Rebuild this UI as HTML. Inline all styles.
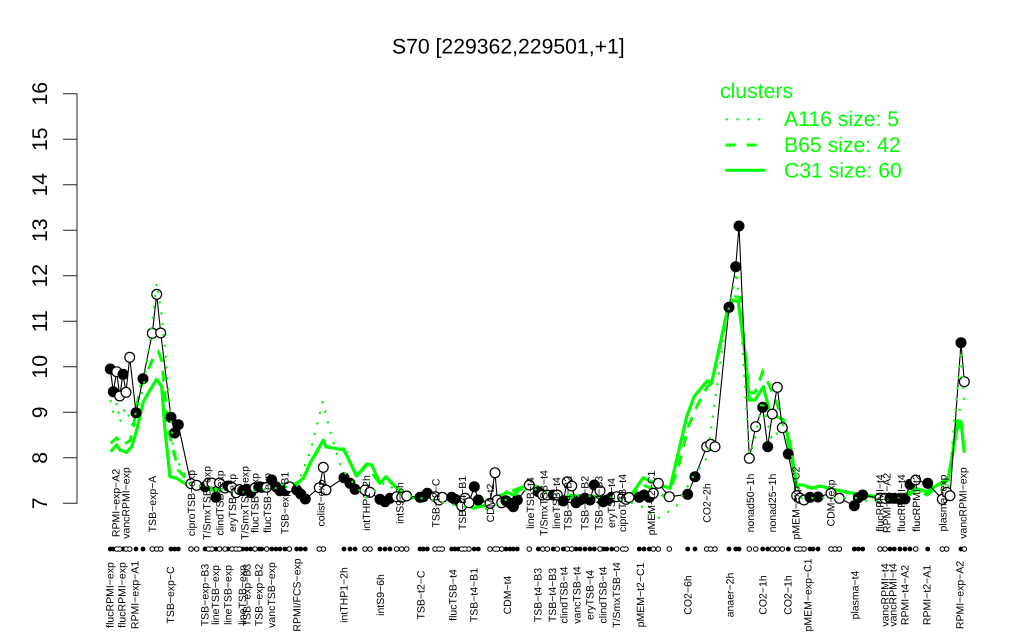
<!DOCTYPE html>
<html><head><meta charset="utf-8"><style>
html,body{margin:0;padding:0;background:#fff;width:1024px;height:640px;overflow:hidden}
svg{display:block}
text{font-family:"Liberation Sans",sans-serif;fill:#000;text-rendering:geometricPrecision}
.y{font-size:21.2px;text-anchor:middle}
.l{font-size:10.5px;text-anchor:middle;fill:#111}
.g{fill:#00ff00;font-size:21.2px}
circle{r:4.9px;stroke:#000;stroke-width:1.2}
.f{fill:#000}.o{fill:#fff}
</style></head><body>
<svg width="1024" height="640" viewBox="0 0 1024 640" xmlns="http://www.w3.org/2000/svg">
<text x="508.3" y="53.5" text-anchor="middle" style="font-size:21.2px">S70 [229362,229501,+1]</text>
<path d="M63 93.7H77V503.3H63M63 139.2H77M63 184.7H77M63 230.2H77M63 275.7H77M63 321.2H77M63 366.8H77M63 412.3H77M63 457.8H77" fill="none" stroke="#222" stroke-width="1"/>
<g class="y">
<text transform="translate(47,503.3) rotate(-90)">7</text>
<text transform="translate(47,457.8) rotate(-90)">8</text>
<text transform="translate(47,412.3) rotate(-90)">9</text>
<text transform="translate(47,366.8) rotate(-90)">10</text>
<text transform="translate(47,321.2) rotate(-90)">11</text>
<text transform="translate(47,275.7) rotate(-90)">12</text>
<text transform="translate(47,230.2) rotate(-90)">13</text>
<text transform="translate(47,184.7) rotate(-90)">14</text>
<text transform="translate(47,139.2) rotate(-90)">15</text>
<text transform="translate(47,93.7) rotate(-90)">16</text>
</g>
<polyline fill="none" stroke="#00ff00" stroke-width="3.2" stroke-linejoin="round" points="110.7,451.7 116.7,445 120,450 126.7,452.3 131.7,446.7 136.7,430 143.3,401.7 150,390 156.7,379.3 161.7,386.7 165,430 170,476.7 176.7,478.3 190,486.7 210,489 240,491 270,488 296.7,483.3 303.3,478.3 310,463.3 323.3,440 326,446.7 344,450 356.7,476 366.7,464 371.7,465 380,483.3 386,476.7 396.7,488 410,498 430,496 453,497 473,508 487,505 497,501.7 506.7,491.7 513,495 530,481.7 537,493 557,495 570,498 590,496 610,498 630,496.7 643.3,477.7 655,483.3 670,488.3 686.7,416.7 694,396.7 707.3,380.7 711.7,382.7 726.7,313.3 733.3,300 738.3,301.7 745,353.3 749.3,400 755,400 763.3,386.7 770,413 783.3,420 790,443.3 796.7,485 803.3,485 811.7,488.3 820,486 836.7,490 856.7,494 871.7,496.7 885,500 906.7,498.3 915,488 926.7,491.7 948.3,478.3 956.7,430 961,421.7 964.3,452.7"/>
<polyline fill="none" stroke="#00ff00" stroke-width="3" stroke-dasharray="11 9" points="110.7,443.3 116.7,438 123,445 130,440.7 133.3,426.7 140,388 153.3,358 158.3,351.7 161.7,360 168.3,430 178.3,470 190,483.3 210,490 240,492 270,489 296.7,484 303.3,479 310,464 323.3,441 326,447 344,449 356.7,477 366.7,465 380,484 386,477 396.7,489 410,499 453,498 473,505 506.7,493 530,484 557,494 590,497 630,497 643.3,485 655,490 666.7,498 676.7,473.3 688.3,426.7 696.7,406.7 707.3,386.7 711.7,383 726.7,316.7 735,296.7 740,297.3 746.7,370 749.3,392.7 755,392.7 762.7,371.7 770,386.7 783.3,420 793.3,466.7 796.7,486.7 820,488 856.7,494 890,498 918,490 926.7,495 948.3,480 956.7,425 960,409"/>
<polyline fill="none" stroke="#000" stroke-width="1.1" stroke-linejoin="round" points="110.3,369 113.3,391.7 116.7,371.7 119.7,396 123,374.3 126,392.3 129.7,357.3 136,412.7 143,378.7 152.3,333.3 156.7,294.3 160.7,333 171,417.3 174.7,433 178.3,424.7 191,483.7 196.7,485.3 205,486.7 208.5,483 212,483 216,497.3 219.5,483 225,488 228,486 232,487.5 236,492.7 239.5,489.5 242.7,490.7 246.7,489.3 250.7,492.7 255,488 259.3,486.7 261.7,487.3 266.7,487.3 271.7,480 276,486.7 280,490.7 285,490.7 289.3,486.7 296.7,490 300.7,494 305.3,499 319.3,487.7 323.3,467.3 326,490 344,477.7 350,483.3 355,489.3 365,490 370,492.3 380,499.3 385,501.7 390,498.3 396.7,496.7 401.7,497.3 406.7,496 420,497.3 423.3,496.7 427.3,493.3 435,496.7 439,500 442.3,497.3 451.7,497.3 455,499.3 458.3,500.7 461.7,505.7 465,498.3 469,502.7 474.3,486.7 478.3,500 490,503.3 495,472.7 497.3,500 501.7,502.7 506,500.7 510,503.3 513.3,506.7 517.3,500 529.3,485 538.3,491.7 542.7,495 547.3,495 553.3,495 557.3,495 563.3,501 567.3,481.7 571.7,486 576,502.7 580,500 585,498.3 590,500 594.3,485 600,490.7 603.3,501.7 606.7,500 611.7,497.3 616.7,496.7 622.7,497.3 626,499.3 629,497.5 639.3,497.3 644,495 649.3,497.3 653.3,493.3 658.3,483.3 669.3,496.7 687.7,494.3 695,476.7 706.7,446.7 710.7,444.3 715,446.7 729,307.3 735.7,266.7 739,226 749.3,458.3 755.7,426.7 762.7,407.3 767.7,446.7 772.3,414 777.3,387.3 782.3,427.7 788.3,454 796.7,495.7 800,498.3 804,500 810,497.3 818,497 831,493.3 839.3,498.3 854.3,505.7 858.3,497.7 862.7,495 880,498.3 885,498.3 890,498.3 894.3,498.3 900,499.3 905,499 910,484.3 915.7,480 927.7,483.3 942.3,499.3 946.7,492.3 950,495.7 961,342.7 964.3,381.7"/>
<circle class="f" cx="110.3" cy="369"/><circle class="f" cx="113.3" cy="391.7"/><circle class="o" cx="116.7" cy="371.7"/><circle class="o" cx="119.7" cy="396"/><circle class="f" cx="123" cy="374.3"/><circle class="o" cx="126" cy="392.3"/><circle class="o" cx="129.7" cy="357.3"/><circle class="f" cx="136" cy="412.7"/><circle class="f" cx="143" cy="378.7"/><circle class="o" cx="152.3" cy="333.3"/><circle class="o" cx="156.7" cy="294.3"/><circle class="o" cx="160.7" cy="333"/><circle class="f" cx="171" cy="417.3"/><circle class="f" cx="174.7" cy="433"/><circle class="f" cx="178.3" cy="424.7"/><circle class="o" cx="191" cy="483.7"/><circle class="o" cx="196.7" cy="485.3"/><circle class="f" cx="205" cy="486.7"/><circle class="o" cx="208.5" cy="483"/><circle class="o" cx="212" cy="483"/><circle class="f" cx="216" cy="497.3"/><circle class="o" cx="219.5" cy="483"/><circle class="o" cx="225" cy="488"/><circle class="f" cx="228" cy="486"/><circle class="o" cx="232" cy="487.5"/><circle class="o" cx="236" cy="492.7"/><circle class="o" cx="239.5" cy="489.5"/><circle class="f" cx="242.7" cy="490.7"/><circle class="f" cx="246.7" cy="489.3"/><circle class="f" cx="250.7" cy="492.7"/><circle class="o" cx="255" cy="488"/><circle class="f" cx="259.3" cy="486.7"/><circle class="f" cx="261.7" cy="487.3"/><circle class="o" cx="266.7" cy="487.3"/><circle class="f" cx="271.7" cy="480"/><circle class="f" cx="276" cy="486.7"/><circle class="f" cx="280" cy="490.7"/><circle class="f" cx="285" cy="490.7"/><circle class="o" cx="289.3" cy="486.7"/><circle class="f" cx="296.7" cy="490"/><circle class="f" cx="300.7" cy="494"/><circle class="f" cx="305.3" cy="499"/><circle class="o" cx="319.3" cy="487.7"/><circle class="o" cx="323.3" cy="467.3"/><circle class="o" cx="326" cy="490"/><circle class="f" cx="344" cy="477.7"/><circle class="f" cx="350" cy="483.3"/><circle class="f" cx="355" cy="489.3"/><circle class="o" cx="365" cy="490"/><circle class="o" cx="370" cy="492.3"/><circle class="f" cx="380" cy="499.3"/><circle class="f" cx="385" cy="501.7"/><circle class="f" cx="390" cy="498.3"/><circle class="o" cx="396.7" cy="496.7"/><circle class="o" cx="401.7" cy="497.3"/><circle class="o" cx="406.7" cy="496"/><circle class="f" cx="420" cy="497.3"/><circle class="f" cx="423.3" cy="496.7"/><circle class="f" cx="427.3" cy="493.3"/><circle class="o" cx="435" cy="496.7"/><circle class="o" cx="439" cy="500"/><circle class="o" cx="442.3" cy="497.3"/><circle class="f" cx="451.7" cy="497.3"/><circle class="f" cx="455" cy="499.3"/><circle class="f" cx="458.3" cy="500.7"/><circle class="o" cx="461.7" cy="505.7"/><circle class="o" cx="465" cy="498.3"/><circle class="o" cx="469" cy="502.7"/><circle class="f" cx="474.3" cy="486.7"/><circle class="f" cx="478.3" cy="500"/><circle class="o" cx="490" cy="503.3"/><circle class="o" cx="495" cy="472.7"/><circle class="o" cx="497.3" cy="500"/><circle class="o" cx="501.7" cy="502.7"/><circle class="f" cx="506" cy="500.7"/><circle class="f" cx="510" cy="503.3"/><circle class="f" cx="513.3" cy="506.7"/><circle class="f" cx="517.3" cy="500"/><circle class="o" cx="529.3" cy="485"/><circle class="f" cx="538.3" cy="491.7"/><circle class="o" cx="542.7" cy="495"/><circle class="o" cx="547.3" cy="495"/><circle class="f" cx="553.3" cy="495"/><circle class="o" cx="557.3" cy="495"/><circle class="f" cx="563.3" cy="501"/><circle class="o" cx="567.3" cy="481.7"/><circle class="o" cx="571.7" cy="486"/><circle class="f" cx="576" cy="502.7"/><circle class="f" cx="580" cy="500"/><circle class="f" cx="585" cy="498.3"/><circle class="f" cx="590" cy="500"/><circle class="f" cx="594.3" cy="485"/><circle class="o" cx="600" cy="490.7"/><circle class="f" cx="603.3" cy="501.7"/><circle class="f" cx="606.7" cy="500"/><circle class="f" cx="611.7" cy="497.3"/><circle class="o" cx="616.7" cy="496.7"/><circle class="o" cx="622.7" cy="497.3"/><circle class="o" cx="626" cy="499.3"/><circle class="o" cx="629" cy="497.5"/><circle class="f" cx="639.3" cy="497.3"/><circle class="f" cx="644" cy="495"/><circle class="f" cx="649.3" cy="497.3"/><circle class="o" cx="653.3" cy="493.3"/><circle class="o" cx="658.3" cy="483.3"/><circle class="o" cx="669.3" cy="496.7"/><circle class="f" cx="687.7" cy="494.3"/><circle class="f" cx="695" cy="476.7"/><circle class="o" cx="706.7" cy="446.7"/><circle class="o" cx="710.7" cy="444.3"/><circle class="o" cx="715" cy="446.7"/><circle class="f" cx="729" cy="307.3"/><circle class="f" cx="735.7" cy="266.7"/><circle class="f" cx="739" cy="226"/><circle class="o" cx="749.3" cy="458.3"/><circle class="o" cx="755.7" cy="426.7"/><circle class="f" cx="762.7" cy="407.3"/><circle class="f" cx="767.7" cy="446.7"/><circle class="o" cx="772.3" cy="414"/><circle class="o" cx="777.3" cy="387.3"/><circle class="o" cx="782.3" cy="427.7"/><circle class="f" cx="788.3" cy="454"/><circle class="o" cx="796.7" cy="495.7"/><circle class="o" cx="800" cy="498.3"/><circle class="o" cx="804" cy="500"/><circle class="f" cx="810" cy="497.3"/><circle class="f" cx="818" cy="497"/><circle class="o" cx="831" cy="493.3"/><circle class="o" cx="839.3" cy="498.3"/><circle class="f" cx="854.3" cy="505.7"/><circle class="f" cx="858.3" cy="497.7"/><circle class="f" cx="862.7" cy="495"/><circle class="o" cx="880" cy="498.3"/><circle class="o" cx="885" cy="498.3"/><circle class="f" cx="890" cy="498.3"/><circle class="f" cx="894.3" cy="498.3"/><circle class="f" cx="900" cy="499.3"/><circle class="f" cx="905" cy="499"/><circle class="f" cx="910" cy="484.3"/><circle class="o" cx="915.7" cy="480"/><circle class="f" cx="927.7" cy="483.3"/><circle class="o" cx="942.3" cy="499.3"/><circle class="o" cx="946.7" cy="492.3"/><circle class="o" cx="950" cy="495.7"/><circle class="f" cx="961" cy="342.7"/><circle class="o" cx="964.3" cy="381.7"/>
<polyline fill="none" stroke="#00ff00" stroke-width="2.4" stroke-linecap="round" stroke-dasharray="0.1 10.8" points="110.7,401 113.5,413 117,403 120,422 123,412 126,408 132,425 136.7,410 143.3,388 152,325 156.7,283 161.7,315 166,360 170,410 173,445 178,462 190,484 240,492 296.7,486 310,453 322.7,401.7 332,438 341.7,469 355,485 366,498 385,482 400,494 460,506 487,509 530,488 557,495 610,497 640,505 657,519 676,507 692,478 707,458 726.7,318 736.7,272 742,340 749.3,455 755,440 762,400 772,440 783,425 790,445 800,498 856,498 870,502 900,498 927,490 948,490 961,350 964,400"/>
<g class="l">
<text transform="translate(119.7,503) rotate(-90)">RPMI−exp−A2</text>
<text transform="translate(129.7,503) rotate(-90)">vancRPMI−exp</text>
<text transform="translate(156,504) rotate(-90)">TSB−exp−A</text>
<text transform="translate(195,503) rotate(-90)">ciproTSB−exp</text>
<text transform="translate(210.3,503) rotate(-90)">T/SmxTSB−exp</text>
<text transform="translate(223.3,503) rotate(-90)">clindTSB−exp</text>
<text transform="translate(236,503) rotate(-90)">eryTSB−exp</text>
<text transform="translate(248.3,503) rotate(-90)">T/SmxTSB−exp</text>
<text transform="translate(258.3,503) rotate(-90)">flucTSB−exp</text>
<text transform="translate(271,503) rotate(-90)">flucTSB−exp</text>
<text transform="translate(288.3,503) rotate(-90)">TSB−exp−B1</text>
<text transform="translate(324.3,503) rotate(-90)">colist−exp</text>
<text transform="translate(370,503) rotate(-90)">intTHP1−2h</text>
<text transform="translate(403.3,503) rotate(-90)">intS9−6h</text>
<text transform="translate(439.3,503) rotate(-90)">TSB−t2−C</text>
<text transform="translate(466,503) rotate(-90)">TSB−t4−B1</text>
<text transform="translate(494,503) rotate(-90)">CDM−t2</text>
<text transform="translate(534,503) rotate(-90)">lineTSB−t4</text>
<text transform="translate(547.3,503) rotate(-90)">T/SmxTSB−t4</text>
<text transform="translate(560,503) rotate(-90)">lineTSB−t4</text>
<text transform="translate(571.3,503) rotate(-90)">TSB−t4−B2</text>
<text transform="translate(588.3,503) rotate(-90)">TSB−t4−B2</text>
<text transform="translate(602.3,503) rotate(-90)">TSB−t4−B3</text>
<text transform="translate(615,503) rotate(-90)">eryTSB−t4</text>
<text transform="translate(626,503) rotate(-90)">ciproTSB−t4</text>
<text transform="translate(655,503) rotate(-90)">pMEM−t2−C1</text>
<text transform="translate(710.3,503) rotate(-90)">CO2−2h</text>
<text transform="translate(754,503) rotate(-90)">nonad50−1h</text>
<text transform="translate(776,503) rotate(-90)">nonad25−1h</text>
<text transform="translate(799.3,503) rotate(-90)">pMEM−exp−C2</text>
<text transform="translate(834.3,503) rotate(-90)">CDM−exp</text>
<text transform="translate(883.3,503) rotate(-90)">flucRPMI−t4</text>
<text transform="translate(890.3,503) rotate(-90)">RPMI−t4−A2</text>
<text transform="translate(905,503) rotate(-90)">flucRPMI−t4</text>
<text transform="translate(920,503) rotate(-90)">flucRPMI−t2</text>
<text transform="translate(946.3,503) rotate(-90)">plasma−exp</text>
<text transform="translate(966.3,503) rotate(-90)">vancRPMI−exp</text>

<text transform="translate(113.3,595) rotate(-90)">flucRPMI−exp</text>
<text transform="translate(125.3,595) rotate(-90)">flucRPMI−exp</text>
<text transform="translate(138.3,595) rotate(-90)">RPMI−exp−A1</text>
<text transform="translate(174,595) rotate(-90)">TSB−exp−C</text>
<text transform="translate(208.3,595) rotate(-90)">TSB−exp−B3</text>
<text transform="translate(219,595) rotate(-90)">lineTSB−exp</text>
<text transform="translate(231.3,595) rotate(-90)">lineTSB−exp</text>
<text transform="translate(246,595) rotate(-90)">lineTSB−exp</text>
<text transform="translate(250.3,595) rotate(-90)">TSB−exp−B3</text>
<text transform="translate(262.3,595) rotate(-90)">TSB−exp−B2</text>
<text transform="translate(275,595) rotate(-90)">vancTSB−exp</text>
<text transform="translate(300.3,595) rotate(-90)">RPMI/FCS−exp</text>
<text transform="translate(347.3,595) rotate(-90)">intTHP1−2h</text>
<text transform="translate(384,595) rotate(-90)">intS9−6h</text>
<text transform="translate(424.3,595) rotate(-90)">TSB−t2−C</text>
<text transform="translate(456.3,595) rotate(-90)">flucTSB−t4</text>
<text transform="translate(477.3,595) rotate(-90)">TSB−t4−B1</text>
<text transform="translate(511,595) rotate(-90)">CDM−t4</text>
<text transform="translate(541.3,595) rotate(-90)">TSB−t4−B3</text>
<text transform="translate(556,595) rotate(-90)">TSB−t4−B3</text>
<text transform="translate(567.3,595) rotate(-90)">clindTSB−t4</text>
<text transform="translate(580.3,595) rotate(-90)">vancTSB−t4</text>
<text transform="translate(593.3,595) rotate(-90)">eryTSB−t4</text>
<text transform="translate(606.3,595) rotate(-90)">clindTSB−t4</text>
<text transform="translate(620,595) rotate(-90)">T/SmxTSB−t4</text>
<text transform="translate(644,595) rotate(-90)">pMEM−t2−C1</text>
<text transform="translate(691.3,595) rotate(-90)">CO2−6h</text>
<text transform="translate(733.3,595) rotate(-90)">anaer−2h</text>
<text transform="translate(766.3,595) rotate(-90)">CO2−1h</text>
<text transform="translate(791.3,595) rotate(-90)">CO2−1h</text>
<text transform="translate(811.3,595) rotate(-90)">pMEM−exp−C1</text>
<text transform="translate(858.3,595) rotate(-90)">plasma−t4</text>
<text transform="translate(888.3,595) rotate(-90)">vancRPMI−t4</text>
<text transform="translate(896.3,595) rotate(-90)">vancRPMI−t4</text>
<text transform="translate(908.3,595) rotate(-90)">RPMI−t4−A2</text>
<text transform="translate(930.3,595) rotate(-90)">RPMI−t2−A1</text>
<text transform="translate(963.3,595) rotate(-90)">RPMI−exp−A2</text>
</g>
<path fill="none" stroke="#000" stroke-width="4.8" stroke-linecap="round" d="M110.3 549h0M113.3 549h0M123 549h0M136 549h0M143 549h0M171 549h0M174.7 549h0M178.3 549h0M205 549h0M216 549h0M228 549h0M242.7 549h0M246.7 549h0M250.7 549h0M259.3 549h0M261.7 549h0M271.7 549h0M276 549h0M280 549h0M285 549h0M296.7 549h0M300.7 549h0M305.3 549h0M344 549h0M350 549h0M355 549h0M380 549h0M385 549h0M390 549h0M420 549h0M423.3 549h0M427.3 549h0M451.7 549h0M455 549h0M458.3 549h0M474.3 549h0M478.3 549h0M506 549h0M510 549h0M513.3 549h0M517.3 549h0M538.3 549h0M553.3 549h0M563.3 549h0M576 549h0M580 549h0M585 549h0M590 549h0M594.3 549h0M603.3 549h0M606.7 549h0M611.7 549h0M639.3 549h0M644 549h0M649.3 549h0M687.7 549h0M695 549h0M729 549h0M735.7 549h0M739 549h0M762.7 549h0M767.7 549h0M788.3 549h0M810 549h0M813 549h0M818 549h0M854.3 549h0M858.3 549h0M862.7 549h0M890 549h0M894.3 549h0M900 549h0M905 549h0M910 549h0M927.7 549h0M961 549h0"/>
<defs><path id="ro" fill="none" stroke-linecap="round" d="M116.7 549h0M119.7 549h0M126 549h0M129.7 549h0M152.3 549h0M156.7 549h0M160.7 549h0M191 549h0M196.7 549h0M208.5 549h0M212 549h0M219.5 549h0M225 549h0M232 549h0M236 549h0M239.5 549h0M255 549h0M266.7 549h0M289.3 549h0M319.3 549h0M323.3 549h0M365 549h0M370 549h0M396.7 549h0M401.7 549h0M406.7 549h0M435 549h0M439 549h0M442.3 549h0M461.7 549h0M465 549h0M469 549h0M490 549h0M495 549h0M497.3 549h0M501.7 549h0M529.3 549h0M542.7 549h0M547.3 549h0M557.3 549h0M567.3 549h0M571.7 549h0M600 549h0M616.7 549h0M622.7 549h0M626 549h0M653.3 549h0M658.3 549h0M669.3 549h0M706.7 549h0M710.7 549h0M715 549h0M749.3 549h0M755.7 549h0M772.3 549h0M777.3 549h0M782.3 549h0M796.7 549h0M800 549h0M804 549h0M831 549h0M835 549h0M839.3 549h0M880 549h0M885 549h0M915.7 549h0M942.3 549h0M946.7 549h0M964.3 549h0"/></defs>
<use href="#ro" stroke="#000" stroke-width="5.6"/>
<use href="#ro" stroke="#fff" stroke-width="3.5"/>
<text class="g" x="720" y="98">clusters</text>
<text class="g" x="784" y="126">A116 size: 5</text>
<text class="g" x="784" y="152">B65 size: 42</text>
<text class="g" x="784" y="177.5">C31 size: 60</text>
<path d="M726.7 119.3h.1M737.5 119.3h.1M748.3 119.3h.1M759.3 119.3h.1" stroke="#00ff00" stroke-width="2.4" stroke-linecap="round" fill="none"/>
<path d="M725.5 145h10M746.7 145h10" stroke="#00ff00" stroke-width="3" fill="none"/>
<path d="M725.3 170.3H765.7" stroke="#00ff00" stroke-width="3" fill="none"/>
</svg>
</body></html>
